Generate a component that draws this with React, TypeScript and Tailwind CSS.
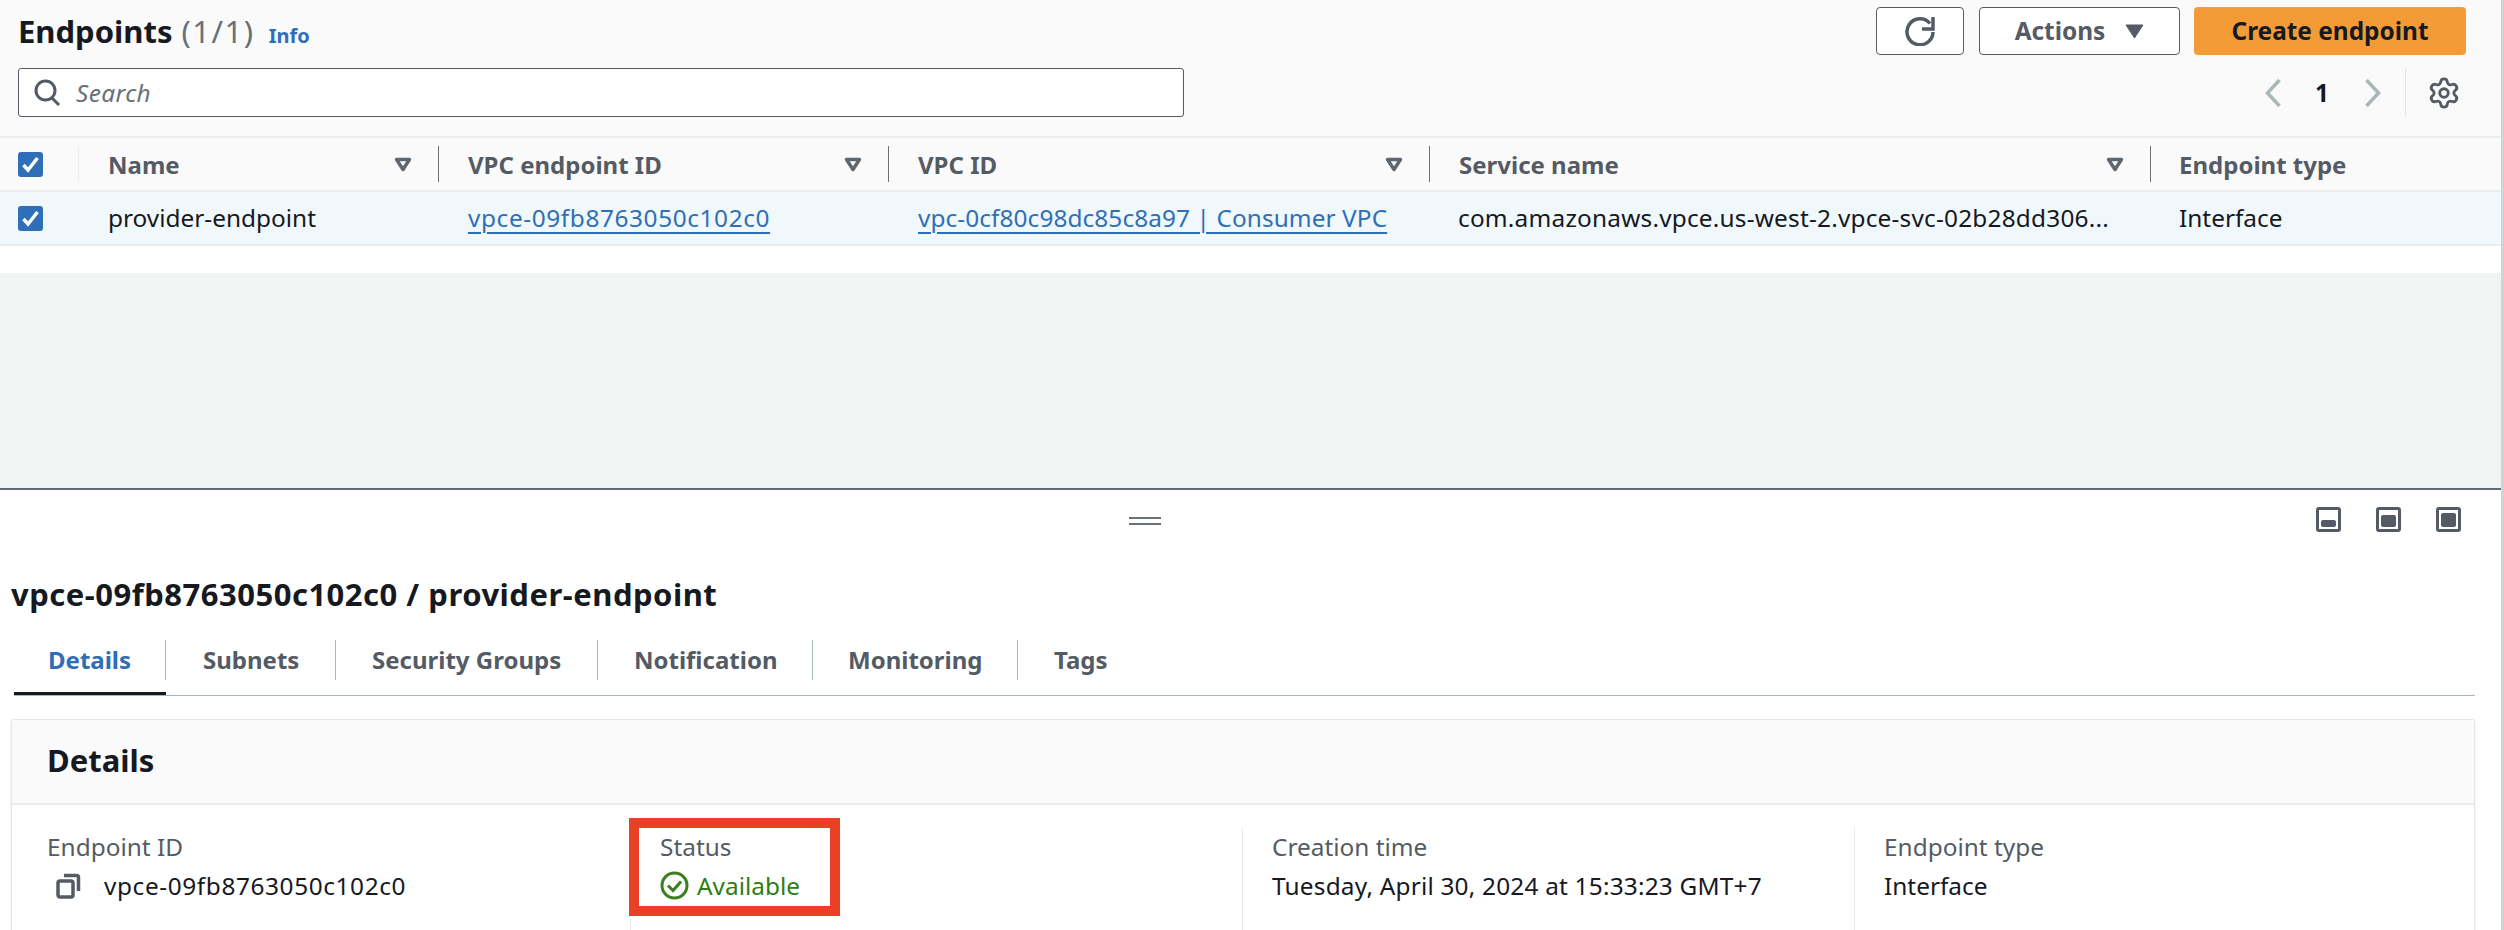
import React from "react";
import { Settings } from "lucide-react";

const font = "font-['Noto_Sans',sans-serif]";

function Check() {
  return (
    <span className="flex h-[25px] w-[25px] items-center justify-center rounded-[3px] bg-[#2f6fb7]">
      <svg width="25" height="25" viewBox="0 0 25 25" fill="none">
        <path d="M5.500 13l4.500 5 9.500-12" stroke="#fff" strokeWidth="3.400" />
      </svg>
    </span>
  );
}

function FilterCaret() {
  return (
    <svg width="18" height="15" viewBox="0 0 18 15" fill="none" className="shrink-0">
      <path d="M2.500 2.500h13L9 12.500z" stroke="#5f6670" strokeWidth="3.400" strokeLinejoin="round" />
    </svg>
  );
}

function Th({ label, width, last }: { label: string; width: string; last?: boolean }) {
  return (
    <div className={`${width} flex h-[36px] items-center justify-between ${last ? "pl-[28px]" : "border-r border-[#687078] pl-[29px] pr-[26px]"}`}>
      <span className="pt-[1px] text-[24px] font-bold text-[#545b64]">{label}</span>
      {!last && <FilterCaret />}
    </div>
  );
}

function PanelIcon({ h }: { h: string }) {
  return (
    <span className="flex h-[25px] w-[25px] items-end rounded-[3px] border-[3.500px] border-[#545b64] bg-white p-[2px]">
      <span className={`${h} w-full rounded-[2px] bg-[#545b64]`} />
    </span>
  );
}

function Field({ label, width, children, divider }: { label: string; width: string; children: React.ReactNode; divider?: boolean }) {
  return (
    <div className={`${width} ${divider ? "border-r border-[#e9ebed]" : ""} h-[110px] pt-[3px] leading-[33px]`}>
      <div className="text-[24.4px] text-[#545b64]">{label}</div>
      <div className="mt-[6px] flex items-center text-[24.4px] text-[#16191f]">{children}</div>
    </div>
  );
}

const tabs = [
  { t: "Details", w: "w-[152px] pl-[34px] text-[#2f6fb7] border-r border-[#aab7b8]" },
  { t: "Subnets", w: "w-[170px] pl-[37px] text-[#545b64] border-r border-[#aab7b8]" },
  { t: "Security Groups", w: "w-[262px] pl-[36px] text-[#545b64] border-r border-[#aab7b8]" },
  { t: "Notification", w: "w-[215px] pl-[36px] text-[#545b64] border-r border-[#aab7b8]" },
  { t: "Monitoring", w: "w-[205px] pl-[35px] text-[#545b64] border-r border-[#aab7b8]" },
  { t: "Tags", w: "pl-[36px] text-[#545b64]" },
];

export default function App() {
  return (
    <div className={`${font} flex h-[930px] w-[2504px] overflow-hidden bg-white text-[#16191f]`}>
      <div className="w-[2501px] shrink-0">
        <div className="bg-[#fafafa]">
          <div className="flex h-[68px] items-start justify-between pl-[18px] pr-[35px] pt-[7px]">
            <div className="flex items-baseline pt-[2px] leading-[44px]">
              <span className="text-[31px] font-bold">Endpoints</span>
              <span className="ml-[9px] text-[31px] tracking-[1.500px] text-[#687078]">(1/1)</span>
              <span className="ml-[14px] text-[20px] font-bold text-[#2f6fb7]">Info</span>
            </div>
            <div className="flex gap-[14px]">
              <button className="mr-[1px] flex h-[48px] w-[88px] items-center justify-center rounded-[4px] border border-[#545b64] bg-white">
                <svg width="30" height="30" viewBox="0 0 30 30" fill="none">
                  <path d="M25 7.500A13 13 0 1 0 28 16" stroke="#545b64" strokeWidth="3.500" />
                  <path d="M28 1v12H17" stroke="#545b64" strokeWidth="3.500" />
                </svg>
              </button>
              <button className="flex h-[48px] w-[201px] items-center justify-center gap-[20px] rounded-[4px] border border-[#545b64] bg-white pt-[1px] text-[24.4px] font-bold text-[#545b64]">
                Actions
                <svg width="19" height="15" viewBox="0 0 19 15"><path d="M1 1h17L9.500 14z" fill="#545b64" stroke="#545b64" strokeLinejoin="round" /></svg>
              </button>
              <button className="h-[48px] w-[272px] rounded-[4px] bg-[#f39c37] pt-[1px] text-[24.4px] font-bold text-[#16191f]">Create endpoint</button>
            </div>
          </div>
          <div className="flex h-[68px] items-start justify-between pl-[18px] pr-[40px]">
            <div className="flex h-[49px] w-[1166px] items-center rounded-[3px] border border-[#545b64] bg-white pl-[14px]">
              <svg width="30" height="30" viewBox="0 0 30 30" fill="none" className="shrink-0">
                <circle cx="12.500" cy="12.500" r="9.500" stroke="#545b64" strokeWidth="3" />
                <path d="M19 20l7 7" stroke="#545b64" strokeWidth="3" />
              </svg>
              <span className="ml-[13px] pt-[1px] text-[24.4px] italic tracking-[0.400px] text-[#687078]">Search</span>
            </div>
            <div className="flex h-[49px] items-center">
              <svg width="16" height="28" viewBox="0 0 16 28" fill="none"><path d="M14.500 1L2.500 14l12 13" stroke="#aab7b8" strokeWidth="3.500" /></svg>
              <span className="ml-[34px] w-[14px] pt-[1px] text-[24.4px] font-bold">1</span>
              <svg width="16" height="28" viewBox="0 0 16 28" fill="none" className="ml-[36px]"><path d="M1.500 1l12 13-12 13" stroke="#aab7b8" strokeWidth="3.500" /></svg>
              <span className="ml-[24px] h-[49px] border-l border-[#e3e6e8]" />
              <Settings size={34} color="#545b64" strokeWidth={2} className="ml-[21px]" />
            </div>
          </div>
          <div className="flex h-[56px] items-center border-y-2 border-[#eaeded] pl-[18px]">
            <div className="flex h-[36px] w-[61px] items-center border-r border-[#eaeded]"><Check /></div>
            <Th label="Name" width="w-[360px]" />
            <Th label="VPC endpoint ID" width="w-[450px]" />
            <Th label="VPC ID" width="w-[541px]" />
            <Th label="Service name" width="w-[721px]" />
            <Th label="Endpoint type" width="w-[300px]" last />
          </div>
          <div className="flex h-[54px] items-center border-b-2 border-[#eaeded] bg-[#f1f8fc] pl-[18px] text-[24.4px]">
            <div className="w-[90px]"><Check /></div>
            <div className="w-[360px] pt-[1px]">provider-endpoint</div>
            <div className="w-[450px] pt-[1px] tracking-[0.600px] text-[#2f6fb7] underline decoration-2 underline-offset-[5px]">vpce-09fb8763050c102c0</div>
            <div className="w-[540px] pt-[1px] tracking-[0.080px] text-[#2f6fb7] underline decoration-2 underline-offset-[5px]">vpc-0cf80c98dc85c8a97 | Consumer VPC</div>
            <div className="w-[721px] whitespace-nowrap pt-[1px] tracking-[0.200px]">com.amazonaws.vpce.us-west-2.vpce-svc-02b28dd306...</div>
            <div className="pt-[1px]">Interface</div>
          </div>
        </div>
        <div className="h-[27px] bg-white" />
        <div className="h-[217px] border-b-2 border-[#5f6b7a] bg-[#f2f3f3]" />
        <div className="relative">
          <div className="flex h-[59px] items-center justify-end gap-[35px] pr-[40px]">
            <PanelIcon h="h-[7px]" />
            <PanelIcon h="h-[12px]" />
            <PanelIcon h="h-[14px]" />
          </div>
          <div className="absolute left-[1129px] top-[27px] flex w-[32px] flex-col gap-[4px]">
            <span className="h-[2px] bg-[#687078]" />
            <span className="h-[2px] bg-[#687078]" />
          </div>
          <div className="mt-[22px] pl-[11px] text-[31px] font-bold leading-[46px] tracking-[0.500px]">vpce-09fb8763050c102c0 / provider-endpoint</div>
          <div className="ml-[14px] mr-[26px] mt-[23px] flex h-[56px] items-start border-b border-[#aab7b8]">
            {tabs.map(({ t, w }, i) => (
              <div key={t} className={i === 0 ? "h-[55px] border-b-[3px] border-[#16191f]" : ""}>
                <div className={`flex h-[40px] items-center text-[24px] font-bold ${w}`}>{t}</div>
              </div>
            ))}
          </div>
          <div className="ml-[11px] mr-[26px] mt-[23px] rounded-t-[3px] border border-[#e4e7e9] shadow-[0_1px_2px_rgba(0,28,36,0.15)]">
            <div className="flex h-[85px] items-center border-b-2 border-[#eaeded] bg-[#fafafa] pb-[3px] pl-[35px] text-[31px] font-bold">Details</div>
            <div className="flex pl-[35px] pt-[22px]">
              <Field label="Endpoint ID" width="w-[584px]" divider>
                <svg width="25" height="26" viewBox="0 0 25 26" fill="none" className="ml-[9px] mr-[23px]">
                  <rect x="2" y="8" width="15" height="16" rx="2" stroke="#545b64" strokeWidth="3.500" />
                  <path d="M8 2.500h12.500a2 2 0 0 1 2 2V18" stroke="#545b64" strokeWidth="3.500" />
                </svg>
                <span className="tracking-[0.600px]">vpce-09fb8763050c102c0</span>
              </Field>
              <Field label="Status" width="w-[612px] pl-[29px]" divider>
                <svg width="29" height="29" viewBox="0 0 29 29" fill="none" className="mr-[8px]">
                  <circle cx="14.500" cy="14.500" r="12.500" stroke="#3a7f1f" strokeWidth="3" />
                  <path d="M8 14.500l5 5 8-9" stroke="#3a7f1f" strokeWidth="3" />
                </svg>
                <span className="text-[#2f7d14]">Available</span>
              </Field>
              <Field label="Creation time" width="w-[612px] pl-[29px]" divider>
                <span className="tracking-[0.200px]">Tuesday, April 30, 2024 at 15:33:23 GMT+7</span>
              </Field>
              <Field label="Endpoint type" width="w-[500px] pl-[29px]">Interface</Field>
            </div>
          </div>
          <div className="absolute left-[629px] top-[328px] h-[98px] w-[211px] border-[10px] border-[#ea4025]" />
        </div>
      </div>
      <div className="w-[3px] bg-[#cfd3d4]" />
    </div>
  );
}
